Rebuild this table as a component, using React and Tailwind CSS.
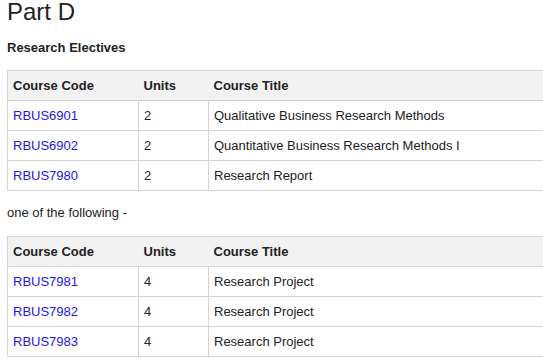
import React from 'react';

const partD = [
  { code: 'RBUS6901', units: 2, title: 'Qualitative Business Research Methods' },
  { code: 'RBUS6902', units: 2, title: 'Quantitative Business Research Methods I' },
  { code: 'RBUS7980', units: 2, title: 'Research Report' },
];

const oneOf = [
  { code: 'RBUS7981', units: 4, title: 'Research Project' },
  { code: 'RBUS7982', units: 4, title: 'Research Project' },
  { code: 'RBUS7983', units: 4, title: 'Research Project' },
];

const CourseTable = ({ courses }) => (
  <table className="w-[620px] border-collapse text-[13px] leading-[16px] text-[#222]">
    <thead>
      <tr className="h-[30px] bg-[#f2f2f2]">
        <th className="w-[131px] border-y border-l border-[#d3d3d3] pl-[5px] text-left font-bold">Course Code</th>
        <th className="w-[70px] border-y border-[#d3d3d3] pl-[5px] text-left font-bold">Units</th>
        <th className="border-y border-[#d3d3d3] pl-[5px] text-left font-bold">Course Title</th>
      </tr>
    </thead>
    <tbody>
      {courses.map((c) => (
        <tr key={c.code} className="h-[30px]">
          <td className="border border-[#d3d3d3] pl-[5px]">
            <a href="#" className="text-[#2415e6]">{c.code}</a>
          </td>
          <td className="border border-[#d3d3d3] pl-[5px]">{c.units}</td>
          <td className="border border-[#d3d3d3] pl-[5px]">{c.title}</td>
        </tr>
      ))}
    </tbody>
  </table>
);

export default function App() {
  return (
    <div className="h-[362px] w-[543px] overflow-hidden bg-white pl-[7px] pt-[1px] font-['Liberation_Sans',Arial,sans-serif] text-[#222]">
      <h2 className="-mt-[1px] text-[24px] font-normal leading-none text-[#222]">Part D</h2>
      <h4 className="mt-[16px] mb-[14px] text-[13px] font-bold leading-[16px]">Research Electives</h4>
      <CourseTable courses={partD} />
      <p className="mt-[14px] mb-[15px] text-[13px] leading-[16px]">one of the following -</p>
      <CourseTable courses={oneOf} />
    </div>
  );
}
